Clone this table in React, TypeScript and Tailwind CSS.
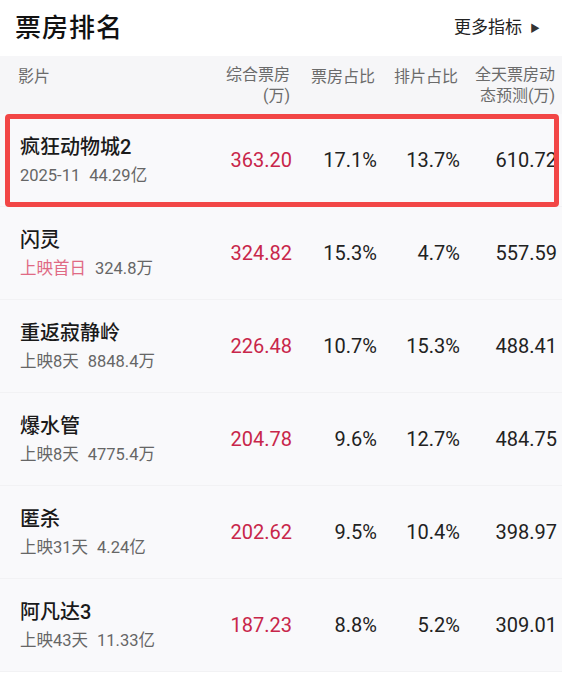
const rows = [
  { name: '疯狂动物城2', tag: '', sub: ['2025-11', '44.29亿'], box: '363.20', boxRatio: '17.1%', showRatio: '13.7%', forecast: '610.72', marked: true },
  { name: '闪灵', tag: '上映首日', sub: ['324.8万'], box: '324.82', boxRatio: '15.3%', showRatio: '4.7%', forecast: '557.59' },
  { name: '重返寂静岭', tag: '', sub: ['上映8天', '8848.4万'], box: '226.48', boxRatio: '10.7%', showRatio: '15.3%', forecast: '488.41' },
  { name: '爆水管', tag: '', sub: ['上映8天', '4775.4万'], box: '204.78', boxRatio: '9.6%', showRatio: '12.7%', forecast: '484.75' },
  { name: '匿杀', tag: '', sub: ['上映31天', '4.24亿'], box: '202.62', boxRatio: '9.5%', showRatio: '10.4%', forecast: '398.97' },
  { name: '阿凡达3', tag: '', sub: ['上映43天', '11.33亿'], box: '187.23', boxRatio: '8.8%', showRatio: '5.2%', forecast: '309.01' },
];

const cols = 'grid grid-cols-[180px_92px_85px_83px_97px] pl-[20px] pr-[5px]';

export default function App() {
  return (
    <div
      className="w-[580px] h-[680px] bg-white overflow-hidden"
      style={{ fontFamily: 'Roboto, "Noto Sans CJK SC", sans-serif' }}
    >
      <div className="w-[562px]">
        <div className="h-[56px] flex items-center justify-between pl-[15px] pr-[22px]">
          <h1 className="text-[26px] font-medium text-[#111] tracking-[1px]">票房排名</h1>
          <div className="flex items-center gap-[8px] text-[17px] text-[#222]">
            更多指标
            <span className="text-[10px] text-[#333]">▶</span>
          </div>
        </div>

        <div className={`${cols} h-[58px] items-center bg-[#f6f6f8] text-[16px] leading-[21px] text-[#6b6b6b] -ml-[2px]`}>
          <div className="-mt-[18px]">影片</div>
          <div className="text-right">综合票房<br />(万)</div>
          <div className="text-right -mt-[18px]">票房占比</div>
          <div className="text-right -mt-[18px]">排片占比</div>
          <div className="text-right">全天票房动<br />态预测(万)</div>
        </div>

        <div className="bg-[#f9f9fb]">
          {rows.map((r) => (
            <div key={r.name} className="relative border-b border-[#f2f2f4]">
              <div className={`${cols} h-[92px] items-center`}>
                <div className="flex flex-col gap-[5px]">
                  <div className="text-[20px] leading-[25px] font-medium text-[#1a1a1a]">{r.name}</div>
                  <div className="flex gap-[9px] text-[16.5px] leading-[21px] text-[#666]">
                    {r.tag && <span className="text-[#e06a84]">{r.tag}</span>}
                    {r.sub.map((s) => (
                      <span key={s}>{s}</span>
                    ))}
                  </div>
                </div>
                <div className="text-right text-[20px] text-[#c8264a]">{r.box}</div>
                <div className="text-right text-[20px] text-[#222]">{r.boxRatio}</div>
                <div className="text-right text-[20px] text-[#222]">{r.showRatio}</div>
                <div className="text-right text-[20px] text-[#222]">{r.forecast}</div>
              </div>
              {r.marked && (
                <div className="absolute left-[5px] right-[3px] top-[0px] -bottom-[1px] border-[5px] border-[#f24646] rounded-[4px]" />
              )}
            </div>
          ))}
        </div>
      </div>
    </div>
  );
}
